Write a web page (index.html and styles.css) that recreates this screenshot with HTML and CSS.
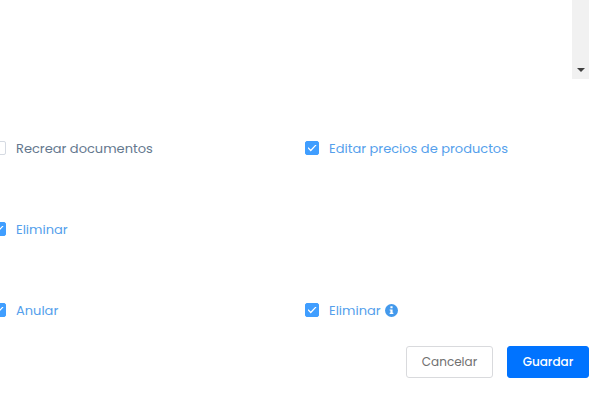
FILE: index.html
```html
<!DOCTYPE html>
<html lang="es">
<head>
  <meta charset="UTF-8" />
  <title>Permisos</title>
  <link rel="stylesheet" href="styles.css">
</head>
<body>
  <form class="permissions">
    <div class="list-box">
      <div class="scroll-track">
        <svg class="scroll-arrow" viewBox="0 0 8 4" aria-hidden="true"><path d="M0 0h8L4 4z" /></svg>
      </div>
    </div>

    <div class="options">
      <label class="option">
        <input type="checkbox">
        <span>Recrear documentos</span>
      </label>
      <label class="option">
        <input type="checkbox" checked>
        <span>Editar precios de productos</span>
      </label>
      <label class="option full">
        <input type="checkbox" checked>
        <span>Eliminar</span>
      </label>
      <label class="option">
        <input type="checkbox" checked>
        <span>Anular</span>
      </label>
      <label class="option">
        <input type="checkbox" checked>
        <span>Eliminar</span>
        <svg class="info" viewBox="0 0 12 12" aria-hidden="true">
          <circle cx="6" cy="6" r="6" />
          <path d="M5 2h2v2H5zM4.3 5H7v3h.7v1.2H4.3V8H5V6.1h-.7z" />
        </svg>
      </label>
    </div>

    <div class="actions">
      <button type="button" class="btn">Cancelar</button>
      <button type="submit" class="btn btn-primary">Guardar</button>
    </div>
  </form>
</body>
</html>
```

FILE: styles.css
```css
body {
  margin: 0;
  background-color: #fff;
  color: #64788e;
  font-family: Poppins, Inter, sans-serif;
  font-size: 13px;
}

.permissions {
  margin: 0 11px 0 -8px;
}

.list-box {
  display: flex;
  justify-content: flex-end;
  height: 79px;
}

.scroll-track {
  display: flex;
  align-items: flex-end;
  justify-content: center;
  width: 17px;
  padding-bottom: 7px;
  box-sizing: border-box;
  background-color: #f1f1f1;
}

.scroll-arrow {
  width: 8px;
  height: 4px;
  fill: #404040;
}

.options {
  display: grid;
  grid-template-columns: 1fr 1fr;
  gap: 61px 29px;
  margin-top: 59px;
}

.option {
  display: flex;
  align-items: center;
  height: 20px;
  line-height: 20px;
}

.option.full {
  grid-column: 1 / -1;
}

.option span {
  padding-top: 2px;
}

.option input {
  appearance: none;
  display: flex;
  align-items: center;
  justify-content: center;
  width: 14px;
  height: 14px;
  margin: 0 10px 0 0;
  box-sizing: border-box;
  border: 1px solid #d5dae2;
  border-radius: 2px;
  background-color: #fff;
}

.option input:checked {
  border-color: #409eff;
  background-color: #409eff;
}

.option input:checked::before {
  content: "";
  width: 9px;
  height: 7px;
  background-color: #fff;
  clip-path: polygon(0 50%, 10% 38%, 36% 72%, 90% 0, 100% 10%, 36% 100%);
}

.option input:checked ~ span {
  color: #559fec;
}

.info {
  width: 13px;
  height: 13px;
  margin-left: 4px;
}

.info circle {
  fill: #4399ec;
}

.info path {
  fill: #fff;
}

.actions {
  display: flex;
  justify-content: flex-end;
  gap: 14px;
  margin-top: 26px;
}

.btn {
  min-width: 87px;
  height: 32px;
  padding: 0 14px;
  border: 1px solid #d9dadd;
  border-radius: 3px;
  background-color: #fff;
  color: #707070;
  font-family: inherit;
  font-size: 12px;
}

.btn-primary {
  min-width: 82px;
  border-color: #0073ff;
  background-color: #0073ff;
  color: #fff;
  font-weight: 500;
}
```
